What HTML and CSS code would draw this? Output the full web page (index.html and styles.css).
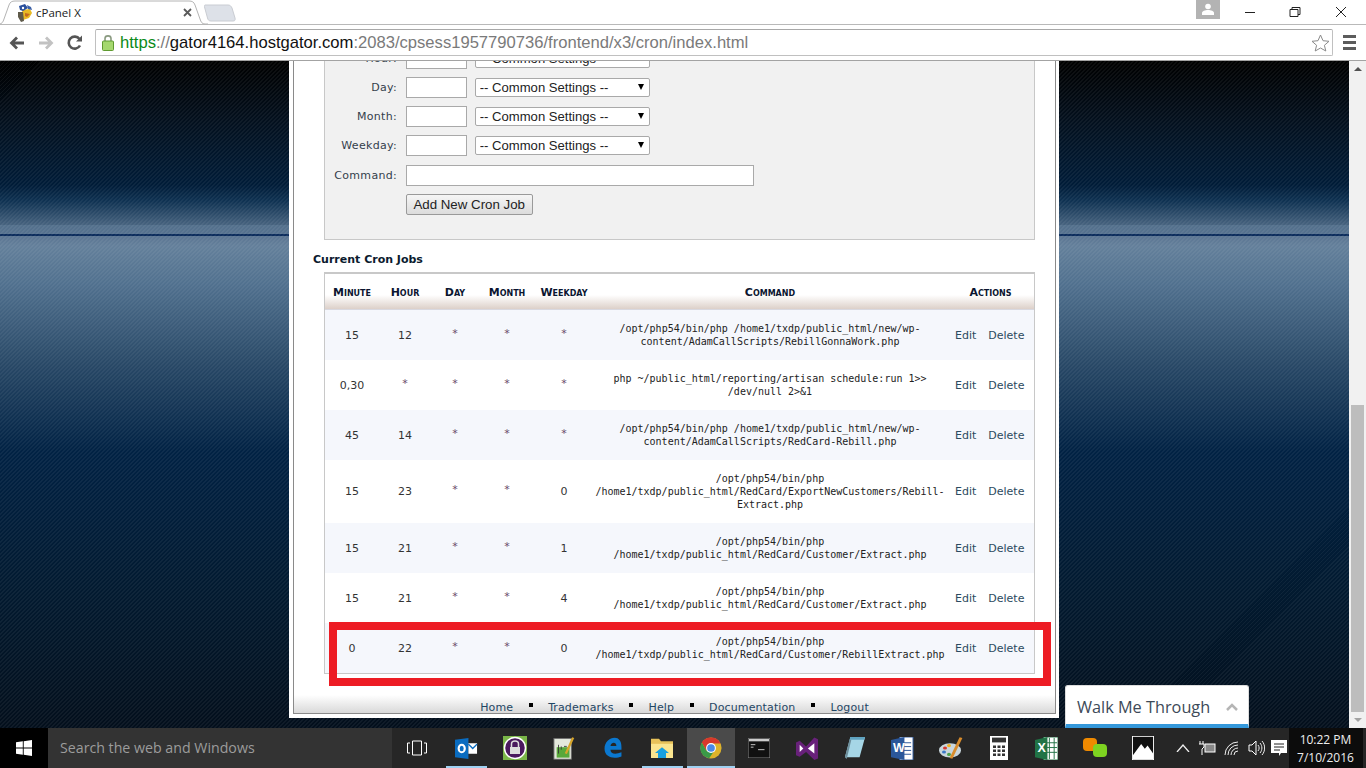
FILE: index.html
```html
<!DOCTYPE html>
<html lang="en">

<head>
    <meta charset="UTF-8">
    <title>cPanel X</title>
    <link rel="stylesheet" href="styles.css">
</head>

<body>

    <header class="chrome">
        <div class="tabstrip">
            <div class="tab">
                <svg class="tab-shape" width="212" height="25" viewBox="0 0 212 25"><path d="M0 24H3C6 24 7 22 8 19L13 5C14 2 16 1 19 1H193C196 1 198 2 199 5L204 19C205 22 206 24 209 24H212" fill="#fff" stroke="#b4b4b4"/></svg>
                <svg class="favicon" width="16" height="18" viewBox="0 0 16 18"><path d="M5 6L13 5L15 9L12 14L6 16Z" fill="#e8b923"/><path d="M2 2L8 0L11 4L6 7L3 6Z" fill="#2a4f9c"/><path d="M1 8L6 8L7 17L4 18L1 13Z" fill="#5f5a4a"/><path d="M10 1L14 3L15 6L11 5Z" fill="#3a5fa8"/><path d="M8 9L13 10L10 13L8 12Z" fill="#c46a1e"/><circle cx="6" cy="4" r="1.200" fill="#fff"/></svg>
                <span class="tab-title">cPanel X</span>
                <svg class="tab-close" width="9" height="9" viewBox="0 0 9 9"><path d="M1 1L8 8M8 1L1 8" stroke="#5a5a5a" stroke-width="1.8"/></svg>
            </div>
            <svg class="newtab" width="32" height="18" viewBox="0 0 32 18"><path d="M1 1H24C26 1 27 2 28 4L31 14C31.500 16 31 17 29 17H7C5 17 4 16 3.500 14L.5 3C.3 2 .5 1 1 1Z" fill="#dde1e8" stroke="#c9ccd2"/></svg>
            <div class="winctrls">
                <div class="avatar"><svg width="12" height="12" viewBox="0 0 12 12"><circle cx="6" cy="3.500" r="2.800" fill="#fff"/><path d="M0 12V10C0 8 3 7 6 7C9 7 12 8 12 10V12Z" fill="#fff"/></svg></div>
                <svg class="winbtn" width="46" height="24" viewBox="0 0 46 24"><path d="M18 12.500H28" stroke="#222"/></svg>
                <svg class="winbtn" width="46" height="24" viewBox="0 0 46 24"><path d="M17 9.500H25V16.500H17ZM19 9.500V7.500H27V14.500H25" fill="none" stroke="#222"/></svg>
                <svg class="winbtn" width="46" height="24" viewBox="0 0 46 24"><path d="M17 7L27 17M27 7L17 17" stroke="#222"/></svg>
            </div>
        </div>
        <div class="toolbar">
            <svg class="navicon" width="16" height="14" viewBox="0 0 16 14"><path d="M15 7H3M8 1.500L2.500 7L8 12.500" fill="none" stroke="#555" stroke-width="2.800"/></svg>
            <svg class="navicon" width="16" height="14" viewBox="0 0 16 14"><path d="M1 7H13M8 1.500L13.500 7L8 12.500" fill="none" stroke="#c2c2c2" stroke-width="2.800"/></svg>
            <svg class="navicon" width="16" height="16" viewBox="0 0 16 16"><path d="M13 10.500A6 6 0 1 1 12.500 4" fill="none" stroke="#555" stroke-width="2.600"/><path d="M9 6.500H15V.5Z" fill="#555"/></svg>
            <div class="omnibox">
                <svg class="lock" width="12" height="17" viewBox="0 0 12 17"><path d="M3 7V4.500C3 1 9 1 9 4.500V7" fill="none" stroke="#8a9a80" stroke-width="1.600"/><rect x=".5" y="7" width="11" height="9.500" rx="1" fill="#a5d86e" stroke="#5f9a30"/></svg>
                <span class="url"><span class="url-green">https</span><span class="url-gray">://</span><span class="url-host">gator4164.hostgator.com</span><span class="url-gray">:2083/cpsess1957790736/frontend/x3/cron/index.html</span></span>
                <svg class="star" width="19" height="18" viewBox="0 0 19 18"><path d="M9.500 1L12 6.700L18 7.300L13.400 11.300L14.800 17L9.500 14L4.200 17L5.600 11.300L1 7.300L7 6.700Z" fill="#fff" stroke="#8a8a8a"/></svg>
            </div>
            <div class="menu-btn"><span></span><span></span><span></span></div>
        </div>
    </header>

    <main class="viewport">
        <div class="page">
            <div class="frame">
                <div class="frame-inner">
                    <form class="cron-form">
                        <div class="form-row"><label>Hour:</label><input type="text" class="short"><span class="sel"><select><option>-- Common Settings --</option></select></span></div>
                        <div class="form-row"><label>Day:</label><input type="text" class="short"><span class="sel"><select><option>-- Common Settings --</option></select></span></div>
                        <div class="form-row"><label>Month:</label><input type="text" class="short"><span class="sel"><select><option>-- Common Settings --</option></select></span></div>
                        <div class="form-row"><label>Weekday:</label><input type="text" class="short"><span class="sel"><select><option>-- Common Settings --</option></select></span></div>
                        <div class="form-row command-row"><label>Command:</label><input type="text" class="long"></div>
                        <div class="form-row"><label></label><button type="button" class="add-btn">Add New Cron Job</button></div>
                    </form>

                    <h2 class="section-title">Current Cron Jobs</h2>

                    <table class="jobs">
                        <colgroup>
                            <col class="c-min"><col class="c-hour"><col class="c-day"><col class="c-month"><col class="c-week"><col class="c-cmd"><col class="c-act">
                        </colgroup>
                        <thead>
                            <tr><th>Minute</th><th>Hour</th><th>Day</th><th>Month</th><th>Weekday</th><th>Command</th><th>Actions</th></tr>
                        </thead>
                        <tbody>
                            <tr><td>15</td><td>12</td><td class="star-cell">*</td><td class="star-cell">*</td><td class="star-cell">*</td><td class="cmd">/opt/php54/bin/php /home1/txdp/public_html/new/wp-content/AdamCallScripts/RebillGonnaWork.php</td><td class="actions"><a>Edit</a><a>Delete</a></td></tr>
                            <tr><td>0,30</td><td class="star-cell">*</td><td class="star-cell">*</td><td class="star-cell">*</td><td class="star-cell">*</td><td class="cmd">php ~/public_html/reporting/artisan schedule:run 1&gt;&gt; /dev/null 2&gt;&amp;1</td><td class="actions"><a>Edit</a><a>Delete</a></td></tr>
                            <tr><td>45</td><td>14</td><td class="star-cell">*</td><td class="star-cell">*</td><td class="star-cell">*</td><td class="cmd">/opt/php54/bin/php /home1/txdp/public_html/new/wp-content/AdamCallScripts/RedCard-Rebill.php</td><td class="actions"><a>Edit</a><a>Delete</a></td></tr>
                            <tr><td>15</td><td>23</td><td class="star-cell">*</td><td class="star-cell">*</td><td>0</td><td class="cmd">/opt/php54/bin/php /home1/txdp/public_html/RedCard/ExportNewCustomers/Rebill-Extract.php</td><td class="actions"><a>Edit</a><a>Delete</a></td></tr>
                            <tr><td>15</td><td>21</td><td class="star-cell">*</td><td class="star-cell">*</td><td>1</td><td class="cmd">/opt/php54/bin/php /home1/txdp/public_html/RedCard/Customer/Extract.php</td><td class="actions"><a>Edit</a><a>Delete</a></td></tr>
                            <tr><td>15</td><td>21</td><td class="star-cell">*</td><td class="star-cell">*</td><td>4</td><td class="cmd">/opt/php54/bin/php /home1/txdp/public_html/RedCard/Customer/Extract.php</td><td class="actions"><a>Edit</a><a>Delete</a></td></tr>
                            <tr><td>0</td><td>22</td><td class="star-cell">*</td><td class="star-cell">*</td><td>0</td><td class="cmd">/opt/php54/bin/php /home1/txdp/public_html/RedCard/Customer/RebillExtract.php</td><td class="actions"><a>Edit</a><a>Delete</a></td></tr>
                        </tbody>
                    </table>

                    <footer class="page-foot">
                        <a>Home</a><span class="sep"></span><a>Trademarks</a><span class="sep"></span><a>Help</a><span class="sep"></span><a>Documentation</a><span class="sep"></span><a>Logout</a>
                    </footer>
                </div>
            </div>
            <div class="redbox"></div>
            <div class="walk">
                <span class="walk-title">Walk Me Through</span>
                <svg width="12" height="8" viewBox="0 0 12 8"><path d="M1 7L6 2L11 7" fill="none" stroke="#b5b5b5" stroke-width="2.500"/></svg>
            </div>
        </div>
        <div class="scrollbar">
            <div class="sb-arrow up"></div>
            <div class="sb-track"><div class="sb-thumb"></div></div>
            <div class="sb-arrow down"></div>
        </div>
    </main>

    <div class="taskbar">
        <div class="start"><svg width="16" height="16" viewBox="0 0 16 16"><path d="M0 2.300L6.800 1.300V7.500H0ZM7.700 1.200L16 0V7.500H7.700ZM0 8.400H6.800V14.700L0 13.700ZM7.700 8.400H16V16L7.700 14.800Z" fill="#fff"/></svg></div>
        <div class="search">Search the web and Windows</div>
        <div class="tb-btn taskview"><svg width="20" height="16" viewBox="0 0 20 16"><path d="M5.500 1H14.500V15H5.500ZM3 3H.5V13H3M17 3H19.500V13H17" fill="none" stroke="#fff"/></svg></div>
        <div class="tb-btn wide on"><svg width="23" height="21" viewBox="0 0 24 24" preserveAspectRatio="none"><path d="M0 2L14 0V24L0 22Z" fill="#0a6cc0"/><rect x="14" y="6" width="9" height="12" fill="#fff"/><path d="M14 7L18.500 12L23 7" fill="none" stroke="#0a6cc0" stroke-width="1.500"/><ellipse cx="7" cy="12" rx="3.200" ry="4.200" fill="none" stroke="#fff" stroke-width="2.200"/></svg></div>
        <div class="tb-btn wide"><svg width="24" height="24" viewBox="0 0 24 24"><rect width="24" height="24" fill="#7ab648"/><circle cx="12" cy="12" r="10.500" fill="#4a1a5e" stroke="#fff" stroke-width="1.500"/><path d="M8.500 11V8C8.500 4 15.500 4 15.500 8V11" fill="none" stroke="#ddd" stroke-width="1.500"/><rect x="7" y="11" width="10" height="7" fill="#ddd"/></svg></div>
        <div class="tb-btn wide"><svg width="22" height="24" viewBox="0 0 24 30" preserveAspectRatio="none"><rect x="1" y="3" width="19" height="26" fill="#e4e8dc" stroke="#6a6a6a"/><rect x="4" y="14" width="14" height="13" fill="#58a83a"/><path d="M6 11V22M9 13V17M12 13H15" stroke="#333"/><path d="M14 22L22 2" stroke="#d8a52a" stroke-width="2.500"/></svg></div>
        <div class="tb-btn wide"><svg width="20" height="22" viewBox="0 0 22 26"><path d="M1 14C1 6 7 1 13 1C18 1 21 5 21 12V15H8C8 20 14 21 21 18V23C13 26 1 25 1 14ZM8 10.500H15C15 5.500 9 5.500 8 10.500Z" fill="#0b78d0"/></svg></div>
        <div class="tb-btn wide on"><svg width="22" height="20" viewBox="0 0 22 24" preserveAspectRatio="none"><path d="M0 1H8L10 4H22V24H0Z" fill="#e8c25a"/><path d="M0 7H22V24H0Z" fill="#fbe58f"/><path d="M7 24V18H4L11 11L18 18H15V24Z" fill="#19a0e0"/></svg></div>
        <div class="tb-btn active on"><svg width="22" height="22" viewBox="0 0 24 24"><circle cx="12" cy="12" r="11.500" fill="#ddb32b"/><path d="M12 .5A11.500 11.500 0 0 0 2 6L7 15L12 7H22.400A11.500 11.500 0 0 0 12 .5Z" fill="#d8382c"/><path d="M2 6A11.500 11.500 0 0 0 10 23.300L14.500 16.500L7 15Z" fill="#3a9a48"/><circle cx="12" cy="12" r="5.400" fill="#fff"/><circle cx="12" cy="12" r="4.200" fill="#4a89e8"/></svg></div>
        <div class="tb-btn"><svg width="22" height="20" viewBox="0 0 24 24" preserveAspectRatio="none"><rect width="24" height="24" fill="#111" stroke="#999"/><rect x="1" y="1" width="22" height="3" fill="#ccc"/><path d="M3 8H8M3 11H6M11 14H18" stroke="#ddd"/></svg></div>
        <div class="tb-btn"><svg width="22" height="24" viewBox="0 0 24 30" preserveAspectRatio="none"><path d="M0 8L4 6L11 13L20 2L24 4V28L20 30L11 20L4 26L0 24Z" fill="#68217a"/><path d="M4 11V20L8 15.500ZM20 9L13 15.500L20 22Z" fill="#fff"/></svg></div>
        <div class="tb-btn"><svg width="22" height="24" viewBox="0 0 24 26"><path d="M7 1H23L17 23H1Z" fill="#a6d6e6"/><path d="M7 1H23L22 4H6Z" fill="#5fa3c0"/><path d="M1 23L6 4L8 4L3 25Z" fill="#6d8f9c"/></svg></div>
        <div class="tb-btn"><svg width="23" height="23" viewBox="0 0 24 24"><path d="M9 0H23V24H9Z" fill="#fff" stroke="#2b579a"/><path d="M12 6H21M12 10H21M12 14H21M12 18H21" stroke="#2b579a"/><path d="M0 3L14 0V24L0 21Z" fill="#2b579a"/><text x="2" y="16" class="logo-letter">W</text></svg></div>
        <div class="tb-btn"><svg width="24" height="24" viewBox="0 0 24 30" preserveAspectRatio="none"><ellipse cx="11" cy="18" rx="11" ry="9" fill="#c9d6dc"/><circle cx="6" cy="15" r="2" fill="#d8382c"/><circle cx="10" cy="12" r="2" fill="#f2b01e"/><circle cx="5" cy="20" r="2" fill="#3a78c8"/><circle cx="10" cy="23" r="2" fill="#4aa04a"/><path d="M12 28L22 2" stroke="#d98c2b" stroke-width="3"/></svg></div>
        <div class="tb-btn"><svg width="18" height="24" viewBox="0 0 18 30" preserveAspectRatio="none"><rect width="18" height="30" fill="#fff"/><rect x="2" y="2" width="14" height="6" fill="#333"/><path d="M3 12H6V15H3ZM7.500 12H10.500V15H7.500ZM12 12H15V15H12ZM3 17H6V20H3ZM7.500 17H10.500V20H7.500ZM12 17H15V20H12ZM3 22H6V25H3ZM7.500 22H10.500V25H7.500ZM12 22H15V25H12Z" fill="#333"/></svg></div>
        <div class="tb-btn"><svg width="23" height="23" viewBox="0 0 24 24"><path d="M9 0H24V24H9Z" fill="#fff" stroke="#217346"/><path d="M15 1V23M20 1V23M10 6H23M10 11H23M10 16H23" stroke="#217346"/><path d="M0 3L13 0V24L0 21Z" fill="#217346"/><text x="2.500" y="16" class="logo-letter">X</text></svg></div>
        <div class="tb-btn"><svg width="24" height="20" viewBox="0 0 24 20"><rect width="14" height="13" rx="4" fill="#f08a00"/><rect x="10" y="6" width="14" height="13" rx="4" fill="#7ed321"/></svg></div>
        <div class="tb-btn"><svg width="22" height="24" viewBox="0 0 24 30" preserveAspectRatio="none"><rect width="24" height="30" fill="#fff"/><rect x="1" y="1" width="22" height="28" fill="#111"/><path d="M1 29V24L10 10L14 16L17 12L23 22V29Z" fill="#fff"/></svg></div>
        <div class="tray">
            <svg width="14" height="8" viewBox="0 0 14 8"><path d="M1 8L7 1L13 8" fill="none" stroke="#eee" stroke-width="1.300"/></svg>
            <svg width="18" height="16" viewBox="0 0 18 16"><path d="M2 1V4M5 1V4M1 4H6V7L4 9V15" fill="none" stroke="#fff"/><rect x="7" y="4" width="10" height="8" fill="#888" stroke="#fff"/></svg>
            <svg width="16" height="15" viewBox="0 0 16 15"><path d="M1 14A13 13 0 0 1 14 1M4 14A10 10 0 0 1 14 4M7 14A7 7 0 0 1 14 7M10 14A4 4 0 0 1 14 10" fill="none" stroke="#eee"/></svg>
            <svg width="17" height="16" viewBox="0 0 17 16"><path d="M1 5H4L8 1V15L4 11H1Z" fill="none" stroke="#fff"/><path d="M10 5C11.500 7 11.500 9 10 11M12 3C14.500 6 14.500 10 12 13M14 1C17.500 5 17.500 11 14 15" fill="none" stroke="#eee"/></svg>
        </div>
        <div class="notif"><svg width="16" height="17" viewBox="0 0 16 17"><path d="M0 0H16V13H10L8 16V13H0Z" fill="#fff"/><path d="M3 4H13M3 7H13M3 10H9" stroke="#222"/></svg></div>
        <div class="clock"><span>10:22 PM</span><span>7/10/2016</span></div>
    </div>

</body>

</html>
```

FILE: styles.css
```css
* {
    margin: 0;
    padding: 0;
    box-sizing: border-box;
}

html, body {
    height: 100%;
    overflow: hidden;
}

body {
    display: flex;
    flex-direction: column;
    font-family: "DejaVu Sans", sans-serif;
    background-color: #000;
}

/* browser window */

.chrome {
    height: 61px;
    flex: none;
    background-color: #fff;
    border-bottom: 1px solid #a3a3a3;
}

.tabstrip {
    height: 24px;
    display: flex;
    position: relative;
}

.tab {
    width: 197px;
    display: flex;
    align-items: center;
    position: relative;
}

.tab-shape {
    position: absolute;
    left: -4px;
    top: 0;
}

.favicon {
    position: relative;
    margin-left: 17px;
    margin-top: 1px;
}

.tab-title {
    position: relative;
    margin-left: 3px;
    font: 11.500px "Open Sans", sans-serif;
    color: #222;
    width: 147px;
}

.tab-close {
    position: relative;
}

.newtab {
    margin-left: 7px;
    margin-top: 4px;
}

.winctrls {
    margin-left: auto;
    margin-right: 1px;
    display: flex;
    align-items: flex-start;
}

.avatar {
    width: 24px;
    height: 19px;
    background-color: #b3b3b3;
    margin-right: 7px;
    display: flex;
    justify-content: center;
    padding-top: 3px;
}

.winbtn {
    display: block;
}

.toolbar {
    height: 36px;
    display: flex;
    align-items: center;
    border-top: 1px solid #b9b9b9;
    padding-left: 9px;
}

.navicon {
    margin-right: 13px;
}

.omnibox {
    width: 1238px;
    height: 27px;
    margin-left: -1px;
    display: flex;
    align-items: center;
    background-color: #fff;
    border: 1px solid #c0c0c0;
    border-top-color: #a8a8a8;
    border-radius: 2px;
    padding-left: 6px;
}

.lock {
    margin-right: 6px;
}

.url {
    font: 16.600px "Liberation Sans", sans-serif;
    white-space: nowrap;
}

.url-green {
    color: #0b8a17;
}

.url-gray {
    color: #7a7a7a;
}

.url-host {
    color: #111;
}

.star {
    margin-left: auto;
    margin-right: 2px;
}

.menu-btn {
    margin-left: 10px;
    width: 13px;
    display: flex;
    flex-direction: column;
    gap: 3px;
}

.menu-btn span {
    height: 3px;
    background-color: #5c5c5c;
}

/* page inside the window */

.viewport {
    height: 667px;
    flex: none;
    display: flex;
}

.page {
    width: 1349px;
    position: relative;
    overflow: hidden;
    background-color: #02101e;
    background-image:
        repeating-linear-gradient(135deg, rgba(255, 255, 255, 0.05) 0, rgba(255, 255, 255, 0.05) 1.4px, transparent 1.4px, transparent 2.83px),
        linear-gradient(180deg, #000 0, #03101e 60px, #001c38 124px, #0f3252 140px, #47637f 164px, #53708c 164px, #56728f 173px, #0b2c5c 173px, #0b2c5c 175px, #5b7592 175px, #64809b 185px, #50708e 225px, #2a4a68 300px, #012244 390px, #021a30 530px, #030f1c 667px);
}

.frame {
    width: 770px;
    margin-left: 289px;
    margin-top: -84px;
    background-color: #fff;
    border: 3px solid #fff;
    border-left-width: 4px;
    border-bottom-width: 4px;
}

.frame-inner {
    border: 1px solid #8a8a8a;
    border-top: 0;
    padding-top: 23px;
    background-color: #fff;
}

.cron-form {
    width: 711px;
    margin-left: 30px;
    height: 237px;
    padding-top: 44px;
    background-color: #f1f1f1;
    border: 1px solid #c8c8c8;
}

.form-row {
    display: flex;
    align-items: center;
    height: 21px;
    margin-bottom: 8px;
}

.command-row {
    margin-top: 9px;
}

.form-row label {
    width: 72px;
    margin-right: 8.700px;
    text-align: right;
    font-size: 11px;
    letter-spacing: 0.3px;
    color: #34404c;
    white-space: nowrap;
}

input[type="text"] {
    height: 21px;
    background-color: #fff;
    border: 1px solid #a9a9a9;
}

.short {
    width: 61px;
    margin-right: 8px;
}

.long {
    width: 348px;
}

.sel {
    position: relative;
    display: block;
}

.sel::after {
    content: "";
    position: absolute;
    right: 6px;
    top: 6px;
    border-left: 3.500px solid transparent;
    border-right: 3.500px solid transparent;
    border-top: 6px solid #000;
}

select {
    display: block;
    appearance: none;
    width: 175px;
    height: 19px;
    padding-left: 4px;
    background-color: #fff;
    border: 1px solid #a9a9a9;
    border-radius: 2px;
    font: 13.100px "Liberation Sans", sans-serif;
    color: #222;
}

.add-btn {
    width: 127px;
    height: 21px;
    font: 13.300px "Liberation Sans", sans-serif;
    color: #222;
    background: linear-gradient(180deg, #f6f6f6, #dcdcdc);
    border: 1px solid #9a9a9a;
    border-radius: 2px;
}

.section-title {
    margin: 13px 0 6px 19px;
    font-size: 11px;
    line-height: 13px;
    font-weight: bold;
    color: #0b1a2e;
}

/* cron table */

.jobs {
    width: 711px;
    margin-left: 30px;
    table-layout: fixed;
    border-collapse: separate;
    border-spacing: 0;
    border: 1px solid #c8c8c8;
    border-top-width: 2px;
    color: #333;
    font-size: 11px;
}

.c-min { width: 54px; }
.c-hour { width: 52px; }
.c-day { width: 48px; }
.c-month { width: 56px; }
.c-week { width: 58px; }
.c-cmd { width: 354px; }
.c-act { width: 87px; }

.jobs th {
    height: 36px;
    padding-top: 1px;
    font-size: 11px;
    font-variant: small-caps;
    color: #0b1530;
    background: linear-gradient(180deg, #fff 0, #fff 60%, #dcd0c9 100%);
    border-bottom: 1px solid #d8d8e0;
}

.jobs td {
    padding: 12px 2px;
    text-align: center;
    line-height: 13px;
}

.jobs tbody tr:nth-child(odd) {
    background-color: #f5f7fc;
}

.jobs .star-cell {
    padding-bottom: 16px;
    color: #6b4a6b;
}

.jobs .cmd {
    font: 10px/13px "DejaVu Sans Mono", monospace;
    color: #222;
}

.jobs .actions {
    padding-right: 4px;
}

.actions a {
    color: #2c4a60;
    margin: 0 6px;
}

/* bottom links */

.page-foot {
    height: 18px;
    margin-top: 21px;
    display: flex;
    justify-content: center;
    align-items: center;
    padding-top: 6px;
    font-size: 11px;
    letter-spacing: 0.12px;
    background: linear-gradient(180deg, #fff, #d9d9d9);
}

.page-foot a {
    color: #1f4664;
}

.sep {
    width: 4px;
    height: 4px;
    margin: -4px 15.500px 0;
    background-color: #000;
}

/* overlays */

.redbox {
    position: absolute;
    left: 329px;
    top: 561px;
    width: 722px;
    height: 64px;
    border: 8px solid #ed1c24;
}

.walk {
    position: absolute;
    left: 1065px;
    top: 624px;
    width: 184px;
    height: 43px;
    display: flex;
    align-items: center;
    justify-content: space-between;
    padding: 3px 10px 0 11px;
    background-color: #fff;
    border: 1px solid #dcdcdc;
    border-bottom: 4px solid #3498db;
    border-radius: 3px 3px 0 0;
}

.walk-title {
    font: 16.300px "Open Sans", sans-serif;
    color: #3d4a58;
}

.scrollbar {
    width: 17px;
    display: flex;
    flex-direction: column;
    background-color: #f1f1f1;
}

.sb-arrow {
    height: 17px;
    position: relative;
}

.sb-arrow::after {
    content: "";
    position: absolute;
    left: 5px;
    top: 6px;
    border-left: 4px solid transparent;
    border-right: 4px solid transparent;
}

.sb-arrow.up::after {
    border-bottom: 4px solid #505050;
}

.sb-arrow.down::after {
    border-top: 4px solid #a3a3a3;
}

.sb-track {
    flex: 1;
    padding: 327px 2px 0;
}

.sb-thumb {
    height: 307px;
    background-color: #bdbdbd;
}

/* windows taskbar */

.taskbar {
    height: 40px;
    flex: none;
    display: flex;
    align-items: stretch;
    background-color: #262626;
    overflow: hidden;
}

.taskbar > * {
    flex: none;
}

.start {
    width: 48px;
    display: flex;
    align-items: center;
    justify-content: center;
    background-color: #000;
}

.search {
    width: 344px;
    padding-left: 12px;
    font: 14.200px/40px "Open Sans", sans-serif;
    color: #9c9c9c;
    background-color: #333;
}

.tb-btn {
    width: 48px;
    display: flex;
    align-items: center;
    justify-content: center;
    position: relative;
}

.tb-btn.wide {
    width: 49px;
}

.taskview {
    width: 49.500px;
}

.tb-btn.on::after {
    content: "";
    position: absolute;
    left: 4px;
    right: 4px;
    bottom: 0;
    height: 2px;
    background-color: #9fd1f2;
}

.tb-btn.active {
    background-color: #4a4a4a;
}

.tb-btn.active::after {
    left: 0;
    right: 0;
}

.logo-letter {
    font: bold 13px "Liberation Sans", sans-serif;
    fill: #fff;
}

.tray {
    margin-left: 9.500px;
    width: 89px;
    display: flex;
    align-items: center;
    justify-content: space-between;
}

.notif {
    width: 23.500px;
    padding-left: 5px;
    display: flex;
    align-items: center;
    justify-content: center;
}

.clock {
    width: 74px;
    display: flex;
    flex-direction: column;
    justify-content: center;
    align-items: center;
    gap: 3px;
    font: 12px/15px "Open Sans", sans-serif;
    color: #eee;
    background-color: #0c0c0c;
}
```
